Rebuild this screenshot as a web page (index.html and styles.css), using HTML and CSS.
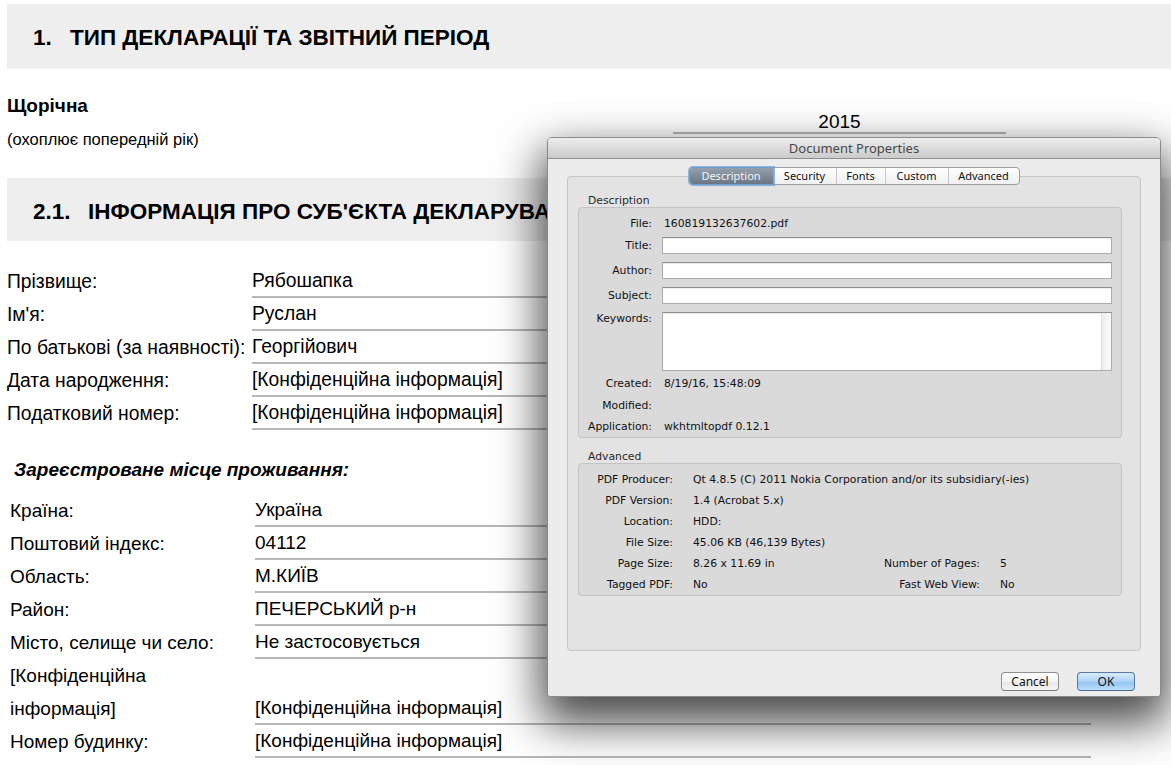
FILE: index.html
```html
<!DOCTYPE html>
<html lang="uk">
<head>
<meta charset="utf-8">
<title>Декларація</title>
<link rel="stylesheet" href="styles.css">
</head>
<body>
<div class="page">
  <div class="band band1"><h1 class="band-title"><span class="num n1">1.</span>ТИП ДЕКЛАРАЦІЇ ТА ЗВІТНИЙ ПЕРІОД</h1></div>
  <div class="period">
    <div class="period-left">
      <div class="kind">Щорічна</div>
      <div class="note">(охоплює попередній рік)</div>
    </div>
    <div class="year">2015</div>
  </div>
  <div class="band band2"><h1 class="band-title"><span class="num n2">2.1.</span>ІНФОРМАЦІЯ ПРО СУБ'ЄКТА ДЕКЛАРУВАННЯ</h1></div>
  <div class="rows rows1">
    <div class="row"><div class="label">Прізвище:</div><div class="value">Рябошапка</div></div>
    <div class="row"><div class="label">Ім'я:</div><div class="value">Руслан</div></div>
    <div class="row"><div class="label">По батькові (за наявності):</div><div class="value">Георгійович</div></div>
    <div class="row"><div class="label">Дата народження:</div><div class="value">[Конфіденційна інформація]</div></div>
    <div class="row"><div class="label">Податковий номер:</div><div class="value">[Конфіденційна інформація]</div></div>
  </div>
  <div class="subhead">Зареєстроване місце проживання:</div>
  <div class="rows rows2">
    <div class="row"><div class="label">Країна:</div><div class="value">Україна</div></div>
    <div class="row"><div class="label">Поштовий індекс:</div><div class="value">04112</div></div>
    <div class="row"><div class="label">Область:</div><div class="value">М.КИЇВ</div></div>
    <div class="row"><div class="label">Район:</div><div class="value">ПЕЧЕРСЬКИЙ р-н</div></div>
    <div class="row"><div class="label">Місто, селище чи село:</div><div class="value">Не застосовується</div></div>
    <div class="row tall"><div class="label wrap">[Конфіденційна інформація]</div><div class="value">[Конфіденційна інформація]</div></div>
    <div class="row"><div class="label">Номер будинку:</div><div class="value">[Конфіденційна інформація]</div></div>
  </div>
</div>

<div class="dialog">
  <div class="titlebar">Document Properties</div>
  <div class="dbody">
    <div class="panel">
      <div class="tabs">
        <div class="seg">
          <span class="tab t-desc sel">Description</span>
          <span class="tab t-sec">Security</span>
          <span class="tab t-fonts">Fonts</span>
          <span class="tab t-custom">Custom</span>
          <span class="tab t-adv">Advanced</span>
        </div>
      </div>
      <div class="glabel">Description</div>
      <div class="gbox desc">
        <div class="drow r-file"><span class="dl">File:</span><span class="dv">160819132637602.pdf</span></div>
        <div class="drow r-title"><span class="dl">Title:</span><span class="field"></span></div>
        <div class="drow r-in"><span class="dl">Author:</span><span class="field"></span></div>
        <div class="drow r-in"><span class="dl">Subject:</span><span class="field"></span></div>
        <div class="drow r-kw"><span class="dl">Keywords:</span><span class="field area"><span class="track"></span></span></div>
        <div class="drow r-created"><span class="dl">Created:</span><span class="dv">8/19/16, 15:48:09</span></div>
        <div class="drow r-txt"><span class="dl">Modified:</span><span class="dv"></span></div>
        <div class="drow r-app"><span class="dl">Application:</span><span class="dv">wkhtmltopdf 0.12.1</span></div>
      </div>
      <div class="glabel glabel-adv">Advanced</div>
      <div class="gbox adv">
        <span class="al">PDF Producer:</span><span class="av span">Qt 4.8.5 (C) 2011 Nokia Corporation and/or its subsidiary(-ies)</span>
        <span class="al">PDF Version:</span><span class="av span">1.4 (Acrobat 5.x)</span>
        <span class="al">Location:</span><span class="av span">HDD:</span>
        <span class="al">File Size:</span><span class="av span">45.06 KB (46,139 Bytes)</span>
        <span class="al">Page Size:</span><span class="av">8.26 x 11.69 in</span><span class="al2">Number of Pages:</span><span class="av2">5</span>
        <span class="al">Tagged PDF:</span><span class="av">No</span><span class="al2">Fast Web View:</span><span class="av2">No</span>
      </div>
    </div>
    <div class="buttons">
      <span class="btn">Cancel</span>
      <span class="btn ok">OK</span>
    </div>
  </div>
</div>
</body>
</html>
```

FILE: styles.css
```css
* { box-sizing: border-box; }
html, body { margin: 0; padding: 0; background: #fff; }
body {
  font-family: "Liberation Sans", Arial, Helvetica, sans-serif;
  color: #000;
  width: 1171px;
  height: 765px;
  overflow: hidden;
  position: relative;
}

/* ---------- page ---------- */
.page { padding: 4px 0 0 7px; }

.band {
  background: #eeeeee;
  display: flex;
  align-items: center;
  padding-left: 26px;
}
.band1 { height: 65px; }
.band2 { height: 63px; }
.band-title {
  margin: 0;
  padding-top: 2px;
  font-size: 22.5px;
  font-weight: bold;
  white-space: nowrap;
  display: flex;
}
.band2 .band-title { padding-top: 4px; }
.num { display: inline-block; }
.n1 { width: 37px; }
.n2 { width: 55px; flex: none; }

.period {
  height: 109px;
  display: flex;
}
.period-left { width: 666px; padding-top: 25px; }
.kind { font-size: 19px; font-weight: bold; line-height: 24px; }
.note { font-size: 16.5px; line-height: 20px; margin-top: 11px; }
.year {
  width: 333px;
  align-self: flex-start;
  margin-top: 43px;
  font-size: 19px;
  line-height: 20px;
  text-align: center;
  border-bottom: 2px solid #b5b5b5;
}

.rows1 { margin-top: 24px; }
.rows2 { padding-left: 3px; }

.row {
  display: flex;
  align-items: flex-start;
  font-size: 19px;
}
.rows1 .row { font-size: 19.3px; }
.row.tall { align-items: flex-end; }
.label {
  width: 245px;
  flex: none;
  line-height: 33px;
  white-space: nowrap;
}
.label.wrap { white-space: normal; padding-right: 10px; }
.value {
  width: 839px;
  flex: none;
  line-height: 31px;
  border-bottom: 2px solid #b7b7b7;
  white-space: nowrap;
}
.rows2 .value { width: 836px; }

.subhead {
  padding: 28px 0 12px 7px;
  line-height: 24px;
  font-size: 19px;
  font-weight: bold;
  font-style: italic;
}

/* ---------- dialog ---------- */
.dialog {
  position: absolute;
  left: 547px;
  top: 137px;
  width: 614px;
  height: 560px;
  background: #ececec;
  border: 1px solid #8a8a8a;
  border-radius: 5px 5px 3px 3px;
  box-shadow: 0 20px 45px 6px rgba(0, 0, 0, 0.72);
  font-family: "Lucida Grande", "Noto Sans", "DejaVu Sans", sans-serif;
  font-size: 11px;
  color: #141414;
  display: flex;
  flex-direction: column;
}
.titlebar {
  height: 21px;
  line-height: 20px;
  text-align: center;
  font-size: 13px;
  color: #474747;
  background: linear-gradient(#ededed, #cbcbcb);
  border-bottom: 1px solid #8f8f8f;
  border-radius: 4px 4px 0 0;
}
.dbody {
  padding: 17px 19px 0 19px;
  display: flex;
  flex-direction: column;
}
.panel {
  width: 574px;
  height: 475px;
  background: #e3e3e3;
  border: 1px solid #c6c6c6;
  border-radius: 4px;
  padding: 0 10px;
}
.tabs {
  display: flex;
  justify-content: center;
  margin-top: -10px;
}
.seg {
  display: flex;
  height: 18px;
  border: 1px solid #9c9c9c;
  border-radius: 4px;
  background: linear-gradient(#ffffff, #f0f0f0);
}
.tab {
  display: block;
  line-height: 16px;
  text-align: center;
  border-left: 1px solid #c9c9c9;
  color: #111;
}
.tab:first-child { border-left: none; }
.tab.sel {
  background: linear-gradient(#94a0ad, #6a7684);
  color: #f4f6f8;
  border-radius: 3px 0 0 3px;
  box-shadow: 0 0 0 2px rgba(103, 159, 222, 0.75);
  position: relative;
}
.t-desc { width: 83px; }
.t-sec { width: 63px; }
.t-fonts { width: 49px; }
.t-custom { width: 63px; }
.t-adv { width: 71px; }

.glabel {
  margin-top: 9px;
  padding-left: 10px;
  height: 13px;
  line-height: 13px;
  font-family: "Lucida Grande", "DejaVu Sans", sans-serif;
  font-size: 10.8px;
  color: #2a2a2a;
}
.glabel-adv { margin-top: 12px; }
.gbox {
  width: 544px;
  background: #dadada;
  border: 1px solid #c3c3c3;
  border-radius: 4px;
  font-family: "Lucida Grande", "DejaVu Sans", sans-serif;
  font-size: 10.8px;
  color: #111;
}
.desc {
  height: 231px;
  padding-top: 9px;
  display: flex;
  flex-direction: column;
}
.drow {
  display: flex;
  align-items: center;
}
.dl {
  width: 73px;
  flex: none;
  text-align: right;
  line-height: 14px;
  white-space: nowrap;
}
.dv {
  padding-left: 12px;
  line-height: 14px;
  white-space: nowrap;
}
.field {
  margin-left: 10px;
  width: 450px;
  height: 17px;
  background: #fff;
  border: 1px solid #ababab;
  border-top-color: #8e8e8e;
  box-shadow: inset 0 1px 0 #ececec;
}
.r-file { height: 14px; }
.r-title { margin-top: 6px; }
.r-in { margin-top: 8px; }
.r-kw { margin-top: 8px; align-items: flex-start; }
.area {
  height: 59px;
  display: flex;
  justify-content: flex-end;
}
.track {
  width: 10px;
  height: 100%;
  background: linear-gradient(90deg, #eeeeee, #fbfbfb);
  border-left: 1px solid #e2e2e2;
}
.r-created { margin-top: 6px; }
.r-txt { margin-top: 8px; height: 14px; }
.r-app { margin-top: 7px; }

.adv {
  height: 133px;
  padding-top: 9px;
  display: grid;
  grid-template-columns: 94px 20px 177px 110px 20px 1fr;
  grid-auto-rows: 14px;
  row-gap: 7px;
  line-height: 14px;
}
.al { grid-column: 1; text-align: right; white-space: nowrap; }
.av { grid-column: 3; white-space: nowrap; }
.av.span { grid-column: 3 / -1; }
.al2 { grid-column: 4; text-align: right; white-space: nowrap; }
.av2 { grid-column: 6; }

.buttons {
  display: flex;
  justify-content: flex-end;
  gap: 18px;
  margin-top: 21px;
  padding-right: 6px;
}
.btn {
  display: block;
  width: 58px;
  height: 19px;
  line-height: 17px;
  text-align: center;
  font-size: 12px;
  color: #111;
  border: 1px solid #8f8f8f;
  border-bottom-color: #7a7a7a;
  border-radius: 4px;
  background: linear-gradient(#ffffff, #f3f3f3 50%, #e6e6e6 51%, #f5f5f5);
}
.btn.ok {
  border-color: #587aa9;
  border-bottom-color: #4a6894;
  background: linear-gradient(#d9ecfd, #abd3f8 50%, #8fc3f3 51%, #bcdefb);
}
```
